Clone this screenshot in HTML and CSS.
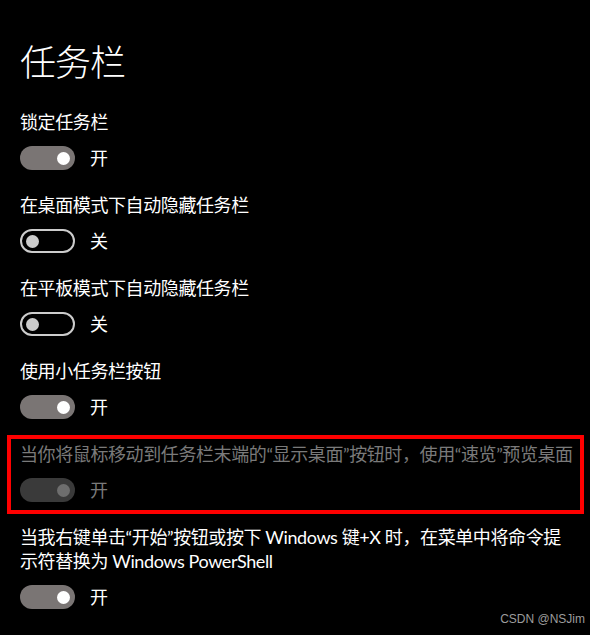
FILE: index.html
```html
<!DOCTYPE html>
<html lang="zh-CN">
<head>
    <meta charset="UTF-8">
    <meta name="viewport" content="width=device-width, initial-scale=1.0">
    <title>任务栏</title>
    <link rel="stylesheet" href="styles.css">
</head>
<body>
    <h1 class="page-title">任务栏</h1>

    <div class="setting">
        <div class="setting-label">锁定任务栏</div>
        <div class="toggle-row">
            <span class="toggle on"><span class="knob"></span></span>
            <span class="toggle-text">开</span>
        </div>
    </div>

    <div class="setting">
        <div class="setting-label">在桌面模式下自动隐藏任务栏</div>
        <div class="toggle-row">
            <span class="toggle off"><span class="knob"></span></span>
            <span class="toggle-text">关</span>
        </div>
    </div>

    <div class="setting">
        <div class="setting-label">在平板模式下自动隐藏任务栏</div>
        <div class="toggle-row">
            <span class="toggle off"><span class="knob"></span></span>
            <span class="toggle-text">关</span>
        </div>
    </div>

    <div class="setting">
        <div class="setting-label">使用小任务栏按钮</div>
        <div class="toggle-row">
            <span class="toggle on"><span class="knob"></span></span>
            <span class="toggle-text">开</span>
        </div>
    </div>

    <div class="setting disabled highlight">
        <div class="setting-label">当你将鼠标移动到任务栏末端的“显示桌面”按钮时，使用“速览”预览桌面</div>
        <div class="toggle-row">
            <span class="toggle on"><span class="knob"></span></span>
            <span class="toggle-text">开</span>
        </div>
    </div>

    <div class="setting">
        <div class="setting-label">当我右键单击“开始”按钮或按下 Windows 键+X 时，在菜单中将命令提示符替换为 Windows PowerShell</div>
        <div class="toggle-row">
            <span class="toggle on"><span class="knob"></span></span>
            <span class="toggle-text">开</span>
        </div>
    </div>

    <div class="watermark">CSDN @NSJim</div>
</body>
</html>
```

FILE: styles.css
```css
:root {
    --bg: #000000;
    --text: #ffffff;
    --text-disabled: #7a7a7a;
    --toggle-on: #7a7574;
    --toggle-off-border: #cccccc;
    --toggle-disabled: #3a3a3a;
    --knob-disabled: #6e6e6e;
    --mark: #ff0000;
}

* {
    box-sizing: border-box;
}

body {
    margin: 0;
    padding: 40px 15px 0 20px;
    background: var(--bg);
    color: var(--text);
    font-family: Lato, "Noto Sans CJK SC", sans-serif;
    font-size: 18px;
}

.page-title {
    margin: 0 0 26px;
    font-size: 36px;
    line-height: 44px;
    font-weight: 300;
    letter-spacing: -1px;
}

.setting {
    margin-bottom: 23px;
}

.setting-label {
    line-height: 24px;
    letter-spacing: -0.4px;
}

.toggle-row {
    display: flex;
    align-items: center;
    gap: 15px;
    height: 24px;
    margin-top: 12px;
}

.toggle {
    display: flex;
    align-items: center;
    width: 55px;
    height: 24px;
    padding: 0 5px;
    border-radius: 12px;
}

.knob {
    width: 13px;
    height: 13px;
    border-radius: 50%;
    background: #ffffff;
}

.toggle.on {
    justify-content: flex-end;
    background: var(--toggle-on);
}

.toggle.off {
    justify-content: flex-start;
    padding: 0 4px;
    border: 2px solid var(--toggle-off-border);
}

.toggle.off .knob {
    background: var(--toggle-off-border);
}

.toggle-text {
    line-height: 24px;
}

/* greyed-out option */
.disabled {
    color: var(--text-disabled);
}

.disabled .toggle.on {
    background: var(--toggle-disabled);
}

.disabled .knob {
    background: var(--knob-disabled);
}

/* red annotation box drawn over the screenshot */
.highlight {
    position: relative;
}

.highlight::after {
    content: "";
    position: absolute;
    top: -7px;
    left: -13px;
    right: -9px;
    bottom: -12px;
    border: 4px solid var(--mark);
}

.watermark {
    position: absolute;
    right: 5px;
    bottom: 8px;
    font-family: "Liberation Sans", Arial, sans-serif;
    font-size: 12px;
    line-height: 16px;
    color: #9c9c9c;
}
```
